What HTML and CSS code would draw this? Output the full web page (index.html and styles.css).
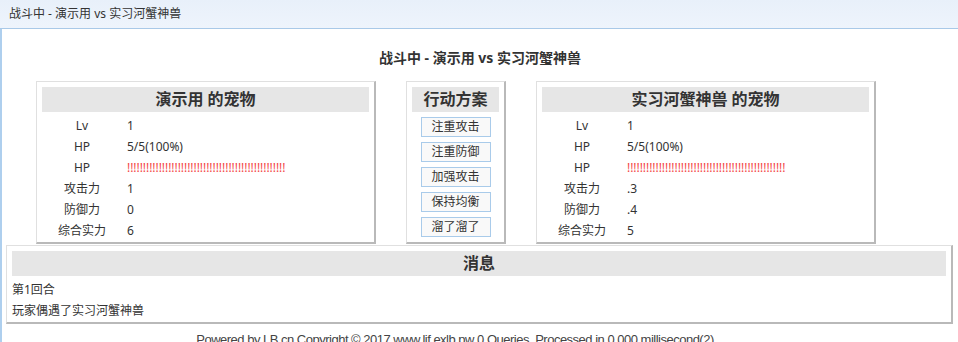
FILE: index.html
```html
<!DOCTYPE html>
<html lang="zh-CN">
<head>
<meta charset="utf-8">
<title>战斗中 - 演示用 vs 实习河蟹神兽</title>
<link rel="stylesheet" href="styles.css">
</head>
<body>
<div class="titlebar">战斗中 - 演示用 vs 实习河蟹神兽</div>
<div class="window">
  <h1 class="heading">战斗中 - 演示用 vs 实习河蟹神兽</h1>
  <div class="arena">
    <section class="card pet">
      <h2 class="card-head">演示用 的宠物</h2>
      <div class="stats">
        <div class="label">Lv</div><div class="value">1</div>
        <div class="label">HP</div><div class="value">5/5(100%)</div>
        <div class="label">HP</div><div class="value bar">!!!!!!!!!!!!!!!!!!!!!!!!!!!!!!!!!!!!!!!!!!!!!!!!!!</div>
        <div class="label">攻击力</div><div class="value">1</div>
        <div class="label">防御力</div><div class="value">0</div>
        <div class="label">综合实力</div><div class="value">6</div>
      </div>
    </section>
    <section class="card actions">
      <h2 class="card-head">行动方案</h2>
      <button class="act">注重攻击</button>
      <button class="act">注重防御</button>
      <button class="act">加强攻击</button>
      <button class="act">保持均衡</button>
      <button class="act">溜了溜了</button>
    </section>
    <section class="card pet">
      <h2 class="card-head">实习河蟹神兽 的宠物</h2>
      <div class="stats">
        <div class="label">Lv</div><div class="value">1</div>
        <div class="label">HP</div><div class="value">5/5(100%)</div>
        <div class="label">HP</div><div class="value bar">!!!!!!!!!!!!!!!!!!!!!!!!!!!!!!!!!!!!!!!!!!!!!!!!!!</div>
        <div class="label">攻击力</div><div class="value">.3</div>
        <div class="label">防御力</div><div class="value">.4</div>
        <div class="label">综合实力</div><div class="value">5</div>
      </div>
    </section>
  </div>
  <section class="card msg">
    <h2 class="card-head">消息</h2>
    <p class="line">第1回合</p>
    <p class="line">玩家偶遇了实习河蟹神兽</p>
  </section>
  <footer class="foot">Powered by LB.cn Copyright © 2017 www.lif.exlb.pw 0 Queries, Processed in 0.000 millisecond(2)</footer>
</div>
</body>
</html>
```
FILE: styles.css
```css
* { box-sizing: border-box; }
html, body { margin: 0; padding: 0; }
body {
  width: 958px;
  height: 342px;
  overflow: hidden;
  background: #fff;
  color: #333;
  font-family: "Noto Sans", "Noto Sans CJK SC", sans-serif;
  font-size: 12px;
}
.titlebar {
  height: 29px;
  line-height: 28px;
  padding-left: 9px;
  background: linear-gradient(#e8f0fa, #eef4fc);
  border-bottom: 1px solid #a9c9e8;
  color: #333;
  font-size: 12px;
}
.window {
  border-left: 2px solid #aecfee;
  height: 313px;
}
.heading {
  margin: 0;
  padding-top: 19px;
  font-size: 14px;
  line-height: 20px;
  font-weight: bold;
  text-align: center;
  color: #333;
}
.arena {
  display: flex;
  align-items: flex-start;
  gap: 30px;
  margin-top: 13px;
  padding-left: 34px;
}
.card {
  background: rgba(255,255,255,0.9);
  border-style: solid;
  border-width: 1px 2px 2px 1px;
  border-color: #e0e0e0 #b9b9b9 #b9b9b9 #e0e0e0;
  padding: 5px;
}
.card-head {
  margin: 0;
  height: 25px;
  line-height: 25px;
  background: #e6e6e6;
  font-size: 16px;
  font-weight: bold;
  text-align: center;
  color: #333;
}
.pet {
  width: 340px;
  padding-bottom: 1px;
}
.stats {
  display: grid;
  grid-template-columns: 80px 1fr;
  grid-auto-rows: 21px;
  margin-top: 3px;
  line-height: 21px;
}
.label { text-align: center; }
.value { padding-left: 5px; white-space: nowrap; }
.bar { color: #f44848; letter-spacing: -0.06px; }
.actions {
  width: 100px;
  display: flex;
  flex-direction: column;
  align-items: center;
}
.actions .card-head { align-self: stretch; }
.act {
  margin-top: 5px;
  width: 70px;
  height: 20px;
  padding: 0;
  border: 1px solid #a9cbea;
  background: #f9f9f9;
  color: #333;
  font-family: "Noto Sans", "Noto Sans CJK SC", sans-serif;
  font-size: 12px;
  line-height: 18px;
}
.msg {
  margin: 1px 5px 0 4px;
  padding-bottom: 0;
  height: 79px;
}
.line {
  margin: 0;
  line-height: 21px;
}
.msg .card-head { margin-bottom: 3px; }
.foot {
  margin-top: 6px;
  padding-right: 50px;
  text-align: center;
  font-family: "Liberation Sans", "Noto Sans CJK SC", sans-serif;
  font-size: 13px;
  letter-spacing: -0.5px;
  line-height: 20px;
  color: #444;
  white-space: nowrap;
}
```
